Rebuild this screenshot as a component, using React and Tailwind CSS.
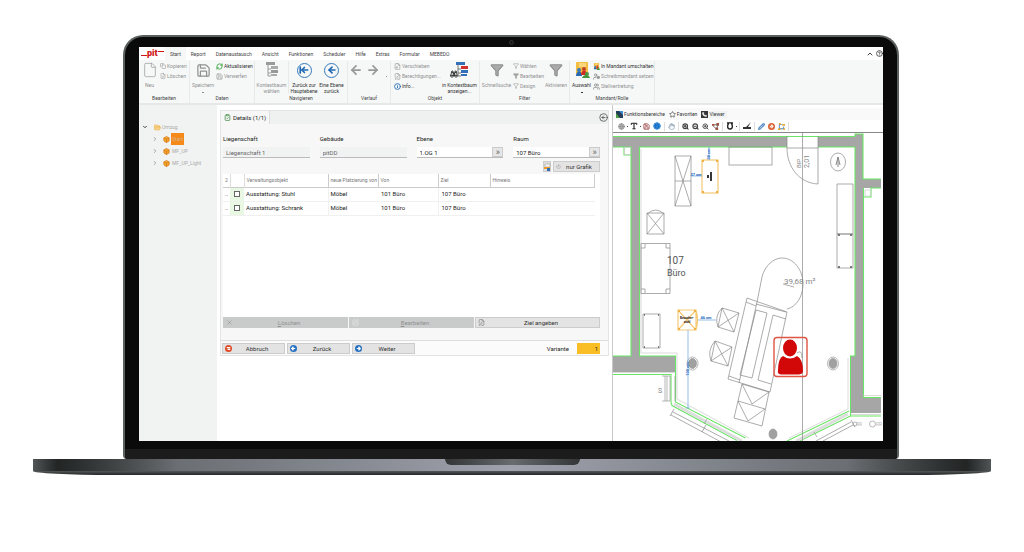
import React, { useState } from "react";
import {
  ArrowLeft,
  ArrowLeftToLine,
  ArrowRight,
  Binoculars,
  Box,
  ChevronDown,
  ChevronRight,
  ChevronUp,
  CircleArrowLeft,
  CircleHelp,
  ClipboardCheck,
  Copy,
  File,
  FileInput,
  FilePen,
  FileX,
  Filter,
  FolderOpen,
  Globe,
  Hand,
  Info,
  Pencil,
  Phone,
  Power,
  RefreshCw,
  Save,
  SquarePen,
  Star,
  Type,
  UserCog,
  Users,
  X,
  ZoomIn,
  ZoomOut,
} from "lucide-react";

const TABS = ["Start", "Report", "Datenaustausch", "Ansicht", "Funktionen", "Scheduler", "Hilfe", "Extras", "Formular", "MEBEDO"];

const ROWS = [
  { id: 1, name: "Ausstattung: Stuhl", kind: "Möbel", from: "101 Büro", to: "107 Büro" },
  { id: 2, name: "Ausstattung: Schrank", kind: "Möbel", from: "101 Büro", to: "107 Büro" },
];

const TreeListIcon = ({ active }) => (
  <svg viewBox="0 0 16 16" className="size-4">
    <path d="M4 3v11M4 7h3M4 11h3M4 14h3" fill="none" stroke={active ? "#777" : "#999"} />
    <rect x="2" y="0" width="9" height="3" fill={active ? "#3370b8" : "#999"} />
    <rect x="7" y="4" width="7" height="3" fill={active ? "#d22f2f" : "#aaa"} />
    <rect x="7" y="8" width="7" height="3" fill={active ? "#3370b8" : "#999"} />
    <rect x="7" y="12" width="6" height="2" fill={active ? "#3370b8" : "#aaa"} />
  </svg>
);

const PeopleIcon = ({ className }) => (
  <svg viewBox="0 0 16 16" className={className}>
    <rect x="2" y="0" width="12" height="12" rx="1" fill="#f4bd3e" />
    <path d="M5 2h7M5 4h7" stroke="#fff0bd" />
    <circle cx="5" cy="8" r="2" fill="#397ac1" />
    <path d="M2 14c0-6 6-6 6 0z" fill="#2769ae" />
    <circle cx="10" cy="7" r="2" fill="#c4422b" />
    <path d="M7 13c0-6 6-6 6 0z" fill="#cf2c25" />
    <circle cx="13" cy="12" r="2" fill="#4c9a43" />
    <path d="M8 16c1-4 7-4 8 0z" fill="#44933d" />
  </svg>
);

const BlueArrow = ({ first }) => (
  <span className="flex size-[15px] items-center justify-center rounded-full border border-[#3478bd] text-[#2168b3]">
    {first ? <ArrowLeftToLine size={10} strokeWidth={4} /> : <ArrowLeft size={10} strokeWidth={4} />}
  </span>
);

const Group = ({ label, className, children }) => (
  <div className={`flex shrink-0 flex-col border-r border-[#e8eaea] ${className}`}>
    <div className="flex flex-1 items-start">{children}</div>
    <div className="h-2 text-center">{label}</div>
  </div>
);

const BigButton = ({ icon, lines, className, active, menu }) => (
  <button className={`flex shrink-0 flex-col items-center pt-px ${active ? "text-[#333]" : "text-[#909090]"} ${className}`}>
    <span className="flex h-4 items-center justify-center">{icon}</span>
    <span className="mt-1 text-center">
      {lines.map((line) => (
        <span key={line} className="block">{line}</span>
      ))}
    </span>
    {menu && <span className="mt-1 h-px w-[2px] bg-current" />}
  </button>
);

const SmallButton = ({ icon, active, children }) => (
  <button className={`flex h-[10px] items-center gap-px ${active ? "text-[#333]" : "text-[#909090]"}`}>
    {icon}
    {children}
  </button>
);

const Ribbon = () => (
  <div className="flex h-[45px] overflow-hidden border-b-2 border-[#e6e8e8] bg-[#f6f8f8] pt-px text-[5px] text-[#444]">
    <Group label="Bearbeiten" className="w-[51px]">
      <BigButton className="w-[21px]" icon={<File size={16} strokeWidth={1} />} lines={["Neu"]} />
      <div>
        <SmallButton icon={<Copy size={6} />}>Kopieren</SmallButton>
        <SmallButton icon={<FileX size={6} />}>Löschen</SmallButton>
      </div>
    </Group>
    <Group label="Daten" className="w-[65px]">
      <BigButton className="w-[26px]" icon={<Save size={15} strokeWidth={2} />} lines={["Speichern"]} menu />
      <div>
        <SmallButton active icon={<RefreshCw size={7} strokeWidth={3} className="text-[#3ba546]" />}>Aktualisieren</SmallButton>
        <SmallButton icon={<Save size={7} />}>Verwerfen</SmallButton>
      </div>
    </Group>
    <Group label="Navigieren" className="w-[93px]">
      <BigButton className="w-[34px] border-r border-[#e8eaea]" icon={<TreeListIcon />} lines={["Kontextbaum", "wählen"]} />
      <BigButton active className="w-[30px]" icon={<BlueArrow first />} lines={["Zurück zur", "Hauptebene"]} />
      <BigButton active className="w-[25px]" icon={<BlueArrow />} lines={["Eine Ebene", "zurück"]} />
    </Group>
    <Group label="Verlauf" className="w-[43px]">
      <div className="flex w-full items-center gap-[3px] pt-[2px] pl-px text-[#999]">
        <button aria-label="Zurück"><ArrowLeft size={14} strokeWidth={3} /></button>
        <button aria-label="Vor"><ArrowRight size={14} strokeWidth={3} /></button>
        <span className="mt-3 ml-[3px] size-px bg-current" />
      </div>
    </Group>
    <Group label="Objekt" className="w-[89px]">
      <div className="w-[50px] pl-[3px]">
        <SmallButton icon={<FileInput size={7} />}>Verschieben</SmallButton>
        <SmallButton icon={<FilePen size={7} />}>Berechtigungen...</SmallButton>
        <SmallButton active icon={<Info size={7} strokeWidth={3} className="text-[#2168b3]" />}>Info...</SmallButton>
      </div>
      <BigButton
        active
        className="w-[37px]"
        icon={<><Binoculars size={8} strokeWidth={3} className="-mr-1 self-end" /><TreeListIcon active /></>}
        lines={["in Kontextbaum", "anzeigen..."]}
      />
    </Group>
    <Group label="Filter" className="w-[90px]">
      <BigButton className="w-[33px]" icon={<Filter size={14} fill="#aaa" />} lines={["Schnellsuche"]} />
      <div className="w-[30px]">
        <SmallButton icon={<Filter size={6} />}>Wählen</SmallButton>
        <SmallButton icon={<Filter size={6} fill="#aaa" />}>Bearbeiten</SmallButton>
        <SmallButton icon={<Filter size={6} />}>Design</SmallButton>
      </div>
      <BigButton className="w-[26px]" icon={<Filter size={14} fill="#aaa" />} lines={["Aktivieren"]} />
    </Group>
    <Group label="Mandant/Rolle" className="w-[85px]">
      <BigButton active menu className="w-[23px]" icon={<PeopleIcon className="size-4" />} lines={["Auswahl"]} />
      <div>
        <SmallButton active icon={<PeopleIcon className="size-[7px]" />}>In Mandant umschalten</SmallButton>
        <SmallButton icon={<UserCog size={7} strokeWidth={3} />}>Schreibmandant setzen</SmallButton>
        <SmallButton icon={<Users size={7} strokeWidth={3} />}>Stellvertretung</SmallButton>
      </div>
    </Group>
  </div>
);

const TabBar = () => (
  <div className="flex h-[13px] items-center bg-white text-[5px] text-[#444]">
    <div className="flex w-[26px] items-center pl-[2px] text-[#cf1717]">
      <span className="mt-1 h-px w-[6px] bg-current" />
      <span className="text-[9px] leading-[9px] font-black">pit</span>
      <span className="mb-1 h-px w-[6px] bg-current" />
    </div>
    <nav className="flex h-full items-center">
      {TABS.map((tab) => (
        <button key={tab} className="h-full px-[5px] first:bg-[#f6f8f8]">{tab}</button>
      ))}
    </nav>
    <div className="ml-auto flex items-center gap-[2px]">
      <ChevronUp size={8} strokeWidth={3} />
      <CircleHelp size={7} strokeWidth={3} />
    </div>
  </div>
);

const Tree = () => (
  <aside className="bg-[#f1f3f3] pt-4 text-[#aaa]">
    <div className="flex h-3 items-center gap-px pl-[3px] text-[5px]">
      <ChevronDown size={6} strokeWidth={4} className="mr-[5px] text-[#444]" />
      <FolderOpen size={7} fill="#fbd58b" className="text-[#e8a83c]" />
      Umzug
    </div>
    {["Start", "MF_UP", "MF_UP_Light"].map((name, i) => (
      <div key={name} className="flex h-3 items-center pl-[13px] text-[5px]">
        <ChevronRight size={6} strokeWidth={3} className="mr-[5px] text-[#888]" />
        <Box size={7} strokeWidth={3} fill="#f6a92b" className="text-[#d77d20]" />
        <span className={i === 0 ? "ml-px w-[13px] bg-[#f58a1b] py-[3px] text-center text-[#d9b186]" : "ml-px px-px"}>{name}</span>
      </div>
    ))}
  </aside>
);

const Field = ({ label, value, pick }) => {
  const id = `field-${label}`;
  return (
    <div className="min-w-0">
      <label htmlFor={id} className="mb-[5px] block">{label}</label>
      <div className="flex h-[11px] border-b border-[#bbb]">
        <input
          id={id}
          defaultValue={value}
          readOnly={!pick}
          className={`w-full min-w-0 px-[3px] ${pick ? "bg-white" : "bg-[#f1f3f3] text-[#666]"}`}
        />
        {pick && <button className="w-[11px] shrink-0 border border-[#ccc] bg-[#e6e6e6] text-[9px] leading-[6px] text-[#666]">»</button>}
      </div>
    </div>
  );
};

const ObjectTable = () => (
  <div className="h-[143px] bg-white pr-[5px]">
    <table className="w-full table-fixed border-collapse text-left">
      <colgroup>
        <col className="w-[7px]" />
        <col className="w-[14px]" />
        <col className="w-[84px]" />
        <col className="w-[50px]" />
        <col className="w-[60px]" />
        <col className="w-[52px]" />
        <col />
      </colgroup>
      <thead>
        <tr className="h-[13px] border-b border-[#ccc] text-[5px] text-[#777]">
          <th className="border-r border-[#ddd] pl-[2px] font-normal">2</th>
          <th className="border-r border-[#ddd]" aria-label="Auswahl" />
          {["Verwaltungsobjekt", "neue Platzierung von", "Von", "Ziel", "Hinweis"].map((h) => (
            <th key={h} className="border-r border-[#ccc] pl-[2px] font-normal">{h}</th>
          ))}
        </tr>
      </thead>
      <tbody>
        {ROWS.map((row) => (
          <tr key={row.id} className="h-[14px] border-b border-[#f0f0f0]">
            <td className="pl-[2px]">..</td>
            <td className="bg-[#e8f8e3]">
              <input
                type="checkbox"
                aria-label={row.name}
                className="ml-1 block size-[6px] appearance-none border border-[#666] bg-white checked:bg-[#555]"
              />
            </td>
            <td className="border-r border-[#f0f0f0] pl-[2px]">{row.name}</td>
            <td className="pl-[2px]">{row.kind}</td>
            <td className="border-r border-[#f0f0f0] pl-[3px]">{row.from}</td>
            <td className="pl-[3px]">{row.to}</td>
            <td />
          </tr>
        ))}
      </tbody>
    </table>
  </div>
);

const ActionButton = ({ icon, disabled, className, children }) => (
  <button
    disabled={disabled}
    className={`flex h-[11px] items-center border px-[2px] ${disabled ? "border-[#c9cbcb] bg-[#c9cbcb] text-[#909292]" : "border-[#ccc] bg-[#e3e3e3] text-[#333]"} ${className}`}
  >
    {icon}
    <span className="flex-1 text-center">{children}</span>
  </button>
);

const StepIcon = ({ d, fill }) => (
  <svg viewBox="0 0 8 8" className="size-[7px]">
    <circle cx="4" cy="4" r="4" fill={fill} />
    <path d={d} fill="none" stroke="#fff" strokeWidth="1.4" />
  </svg>
);

const Details = () => {
  const [variant, setVariant] = useState("1");

  return (
    <main className="border-r border-[#c8c8c8] bg-white px-[3px] pt-[5px]">
      <section className="border border-[#e3e5e5] bg-[#f7f7f7]">
        <div className="flex h-[13px] items-center justify-between bg-[#eff1f1]">
          <h1 className="flex h-full items-center gap-[2px] border-r border-[#ddd] bg-[#f7f7f7] px-[3px]">
            <ClipboardCheck size={7} strokeWidth={3} className="text-[#5a9a5e]" />
            Details (1/1)
          </h1>
          <button aria-label="Zurück" className="text-[#444]"><CircleArrowLeft size={9} /></button>
        </div>
        <div className="pr-[8px] pl-[2px]">
          <div className="grid grid-cols-4 gap-[10px] pt-3">
            <Field label="Liegenschaft" value="Liegenschaft 1" />
            <Field label="Gebäude" value="pitDD" />
            <Field label="Ebene" value="1.OG 1" pick />
            <Field label="Raum" value="107 Büro" pick />
          </div>
          <div className="mt-[3px] mb-[2px] flex justify-end gap-[2px]">
            <button aria-label="Karte" className="flex h-[11px] w-2 items-center justify-center border border-[#ccc] bg-[#ddd]">
              <svg viewBox="0 0 7 8" className="h-2 w-[7px] shrink-0">
                <path fill="#f5f5f5" stroke="#999" strokeWidth="0.5" d="M1 1h5v3H1z" />
                <path fill="#f39a2d" d="M0 4h6v2H0z" />
                <path fill="#346fb3" d="M3 5h3v3H3z" />
              </svg>
            </button>
            <ActionButton className="w-[47px]" icon={<Power size={5} className="text-[#888]" />}>nur Grafik</ActionButton>
          </div>
          <ObjectTable />
          <div className="grid grid-cols-3 gap-px">
            <ActionButton disabled icon={<X size={7} />}><u>L</u>öschen</ActionButton>
            <ActionButton disabled icon={<SquarePen size={7} className="text-[#eee]" />}><u>B</u>earbeiten</ActionButton>
            <ActionButton icon={<FilePen size={7} className="text-[#777]" />}>Ziel angeben</ActionButton>
          </div>
        </div>
        <div className="mt-3 flex items-center gap-[2px] border-t border-[#ddd] bg-[#fbfbfb] pt-[2px] pr-[8px] pb-px pl-px">
          <ActionButton className="w-[63px]" icon={<StepIcon fill="#df4b24" d="M2 3h4M3 5h3" />}>Abbruch</ActionButton>
          <ActionButton className="w-[63px]" icon={<StepIcon fill="#2670c1" d="M6 4H2M4 2L2 4l2 2" />}>Zurück</ActionButton>
          <ActionButton className="w-[63px]" icon={<StepIcon fill="#2670c1" d="M2 4h4M4 2l2 2-2 2" />}>Weiter</ActionButton>
          <label htmlFor="variant" className="mr-[6px] ml-auto">Variante</label>
          <input
            id="variant"
            value={variant}
            onChange={(e) => setVariant(e.target.value)}
            className="h-[11px] w-[23px] bg-[#f9bd25] px-[2px] text-right"
          />
        </div>
      </section>
    </main>
  );
};

const Divider = () => <span className="h-[9px] w-px bg-[#ddd]" />;

const Dot = () => <span className="-mx-px size-px bg-current" />;

const ViewerBar = () => (
  <>
    <div className="flex h-3 items-center bg-[#f9f9f9] pl-[3px] text-[5px] text-[#333]">
      <button className="flex items-center gap-px pr-1">
        <svg viewBox="0 0 7 7" className="size-[7px]">
          <path fill="#253d55" d="M0 0h7v7H0z" />
          <path fill="#3d8edb" d="M3 0h4v4z" />
          <path fill="#4d9c48" d="M0 2l4 5H0z" />
        </svg>
        Funktionsbereiche
      </button>
      <button className="flex items-center gap-px pr-1"><Star size={7} />Favoriten</button>
      <button className="flex items-center gap-px bg-[#f1f3f3] pr-[2px]">
        <span className="bg-[#333] p-px text-white"><Phone size={5} fill="#fff" /></span>
        Viewer
      </button>
    </div>
    <div className="flex h-[13px] items-center gap-[3px] border-b border-[#888] bg-white pl-[5px] text-[#444]">
      <Globe size={7} fill="#bbb" className="text-[#888]" />
      <Dot />
      <Type size={8} strokeWidth={4} />
      <Dot />
      <Save size={7} strokeWidth={3} className="text-[#a35252]" />
      <Info size={8} strokeWidth={3} fill="#176fc4" className="text-[#4a9be3]" />
      <Divider />
      <Hand size={7} className="text-[#6f8ea5]" />
      <Divider />
      <ZoomIn size={7} strokeWidth={4} />
      <ZoomOut size={7} strokeWidth={4} />
      <ZoomIn size={7} strokeWidth={3} />
      <svg viewBox="0 0 8 8" className="size-[7px]">
        <path d="M0 1h3v2H0zM5 0h3v3H5zM4 5h3v3H4z" fill="#a5523c" />
        <path d="M1 3l4 4M3 2h3v4" fill="none" stroke="#666" />
      </svg>
      <Divider />
      <svg viewBox="0 0 8 8" className="size-2">
        <path d="M1 1h2C1 3 1 7 4 7s3-4 1-6h2" fill="none" stroke="#222" strokeWidth="1.4" />
      </svg>
      <Dot />
      <Divider />
      <svg viewBox="0 0 8 8" className="size-2"><path d="M0 7h8V5H5l3-5-5 5H0z" fill="#333" /></svg>
      <Divider />
      <Pencil size={7} strokeWidth={4} className="text-[#5a91c9]" />
      <StepIcon fill="#dc6232" d="M2 5l3-3M4 6l2-3" />
      <svg viewBox="0 0 8 8" className="size-[7px]">
        <path d="M1 1h4v1H2v4h4V4h1v3H1z" fill="#3e86c4" />
        <path d="M1 0h2v2H1zM5 1h3v2H5zM0 6h3v2H0zM6 6h2v2H6z" fill="#eda735" />
      </svg>
      <Divider />
    </div>
  </>
);

const FloorPlan = () => (
  <svg viewBox="613 133 270 308" className="block w-full bg-white" fill="none" stroke="#888" strokeWidth="0.7">
    {/* walls */}
    <g fill="#a6a6a6" stroke="none">
      <path d="M613 137h174v10H613zM818 137h45v10h-45z" />
      <path d="M631 147h8v209h36v16h-62v-16h18z" />
      <path d="M855 134h8v45h18v9h-18v210h18v15h-30v-57h4z" />
    </g>
    <g stroke="#6be566" strokeWidth="1.1">
      <path d="M613 136.500H855V134h8v45h18M613 147h18v209H613M639.500 147H787M818 147h37v209h-4.500v60H881M639.500 147v209h36v46l70 36" />
      <path d="M863.500 188v209.500H881M881 188h-10v9h-7.500M613 374.500h58v28l1 3 65 35M624 147v8h7M850.500 416l-51 25M849 411l-62 30" />
    </g>
    <path d="M624.500 147.500h6v7h-6zM865 190h6v6h-6zM613 372.500h62M863 395.500h18M851 414.500h30M641 149v204h36v46l72 39M848 358v51l-59 29" stroke="#ccc" />
    <path d="M674 404l68 37M848 414l-52 27" stroke="#ddd" strokeWidth="3" />
    <path d="M670 376v25M675 376v25M665 376v25M667 376v25M662 376h8M662 401h8M707 419l-3 5M814 432l3 5" stroke="#999" />
    <path d="M673 412l56 29M671 415l52 28M670 416l4-7M702 432l4-7M853 425l-30 16M851 422l-35 19M851 420l4 7" />

    {/* door and centre line */}
    <path d="M802.500 133v308M787 136v12h31M818 136v48M787 148c0 19 12 35 31 36" />
    <rect x="729" y="147" width="43" height="18" />

    {/* cabinets and desks */}
    <path d="M675 156h16v50h-16zM675 156l16 50M691 156l-16 50M675 181h16" />
    <path d="M647 213h17v21h-17zM647 213l17 21M664 213l-17 21M647 214q9-8 17 0" />
    <path d="M641 243.500h29v50h-29zM641 248h4v-4M670 248h-4v-4M641 289h4v4M670 289h-4v4" />
    <path d="M643 314h17v34h-17z" />
    <path d="M837 184h16v50h-16zM837 234h16v34h-16z" />
    <path
      d="M644 315h1M658 315h1M644 347h1M658 347h1M838 235h2M850 235h2M838 267h2M850 267h2"
      stroke="#555"
      strokeWidth="1.500"
    />
    <path d="M757 302l5-25c3-12 12-19 20-19 12 0 21 12 21 26 0 13-7 23-16 25" />
    <path d="M747 298l40 14-17 80-42-13zM757 302l-18 81M746 302l10 4M729 376l11 4M756 310l11 3-15 65-12-3M756 310l-16 65M786 319l-13-4-15 65 13 4M756 304l30 8" />
    <path d="M742 384l27 8-7 34-28-8zM738 401l27 8M742 384l10 20 17-12M738 401l10 20 17-12" />
    <path d="M722 308l17 5-5 19-16-5zM722 308l12 24M739 313l-21 14M722 308q-8 8-4 19" />
    <path d="M715 341l17 6-4 19-17-5zM715 341l13 25M732 347l-21 14M715 341q-8 9-4 20" />

    {/* columns and north arrow */}
    <g stroke="#999">
      <ellipse cx="692.500" cy="363.500" rx="5.500" ry="6.500" />
      <ellipse cx="833" cy="363.500" rx="5.500" ry="6.500" />
      <g fill="#a0a0a0">
        <ellipse cx="692.500" cy="363.500" rx="4" ry="5" />
        <ellipse cx="833" cy="363.500" rx="4" ry="5" />
        <ellipse cx="773" cy="434" rx="4" ry="5" />
      </g>
      <circle cx="872.500" cy="424" r="3" />
      <circle cx="855" cy="424" r="2" />
    </g>
    <ellipse cx="838" cy="162" rx="7.500" ry="9" />
    <path d="M838 167v-10l-2 8M838 157l2 8" strokeWidth="1" />

    {/* selected furniture */}
    <g stroke="#f6c977" strokeWidth="1.200">
      <rect x="702" y="160" width="16" height="33" />
      <path d="M678 310h18v20h-18zM678 310l18 20M696 310l-18 20M696 310q3 10 0 20" />
    </g>
    <path d="M702 161h2M716 161h2M702 192h2M716 192h2M678 311h2M694 311h2M678 329h2M694 329h2" stroke="#efb03e" strokeWidth="2" />
    <path d="M711 172v9M708 175v3" stroke="#222" strokeWidth="1.800" />
    <path d="M709 147v13M691 176h11M698 320h18M688 330v78M686 408h4" stroke="#6aa5e0" />
    <g fill="#1766bd" stroke="none" fontSize="4" fontWeight="700" textAnchor="middle">
      <text x="696" y="176">37 cm</text>
      <text x="706" y="319">46 cm</text>
      <text transform="translate(710 154) rotate(-90)">30 cm</text>
      <text transform="translate(689 369) rotate(-90)">100 cm</text>
    </g>
    <g fill="#111" stroke="none" fontSize="3" fontWeight="700" textAnchor="middle">
      <text x="687" y="319">Besucher-</text>
      <text x="687" y="323">stuhl</text>
    </g>

    {/* labels */}
    <g fill="#555" stroke="none" fontSize="10">
      <text x="667" y="264">107</text>
      <text x="667" y="276" fontSize="9">Büro</text>
    </g>
    <g fill="#888" stroke="none" fontSize="8">
      <text x="784" y="284">39,68 m²</text>
      <text x="658" y="393" fontSize="7">S</text>
      <text x="856" y="426" fontSize="5" fill="#bbb">RR</text>
      <text x="876" y="426" fontSize="5" fill="#bbb">RR</text>
      <text transform="translate(801 168) rotate(-90)" fontSize="6">BIP</text>
      <text transform="translate(809 168) rotate(-90)" fontSize="7">2,01</text>
    </g>
    <path d="M783 284l11 3" />

    {/* user marker */}
    <rect x="774" y="337.500" width="33" height="39" rx="3" stroke="#df5642" strokeWidth="1.400" />
    <path d="M797 353q5-4 5 5" />
    <g fill="#d20808" stroke="none">
      <ellipse cx="790" cy="348" rx="7" ry="8.500" />
      <path d="M783 356q7 5 14 0 6 3 6 15 0 3-4 3.500h-18q-4-.5-3-4 0-12 5-14.500z" />
    </g>
  </svg>
);

const App = () => {
  return (
    <div className="min-h-screen bg-white px-[33px] pt-[35px] font-[Roboto,sans-serif] text-[6px] leading-[6px] whitespace-nowrap text-[#222]">
      <div className="mr-[92px] ml-[90px] overflow-hidden rounded-t-[20px] rounded-b-[4px] border-2 border-b-0 border-[#5c6060] bg-[#0a0a0a]">
        <div className="flex h-[10px] items-center justify-center">
          <span className="size-[5px] rounded-full border border-[#333] bg-[#151515]" />
        </div>
        <div className="mx-[14px] overflow-hidden bg-white">
          <TabBar />
          <Ribbon />
          <div className="grid grid-cols-[78px_minmax(0,1fr)_270px]">
            <Tree />
            <Details />
            <div className="pt-[3px]">
              <ViewerBar />
              <FloorPlan />
            </div>
          </div>
        </div>
        <div className="h-2" />
        <div className="h-[10px] bg-[#1c1c1c]" />
      </div>
      <div className="flex h-3 items-start justify-center bg-linear-to-r from-[#555a5c] via-[#a0a3ae] to-[#555a5c]">
        <div className="h-full flex-1 bg-linear-to-r from-[#505557] via-[#222524] via-6% to-transparent to-35%" />
        <div className="h-[6px] w-[135px] rounded-b-[6px] bg-linear-to-r from-[#333536] via-[#686c6f] to-[#333536]" />
        <div className="h-full flex-1 bg-linear-to-l from-[#505557] via-[#222524] via-6% to-transparent to-35%" />
      </div>
      <div className="h-1 rounded-[0_0_80px_80px/0_0_4px_4px] bg-linear-to-b from-[#535759] to-[#242727]" />
    </div>
  );
};

export default App;
